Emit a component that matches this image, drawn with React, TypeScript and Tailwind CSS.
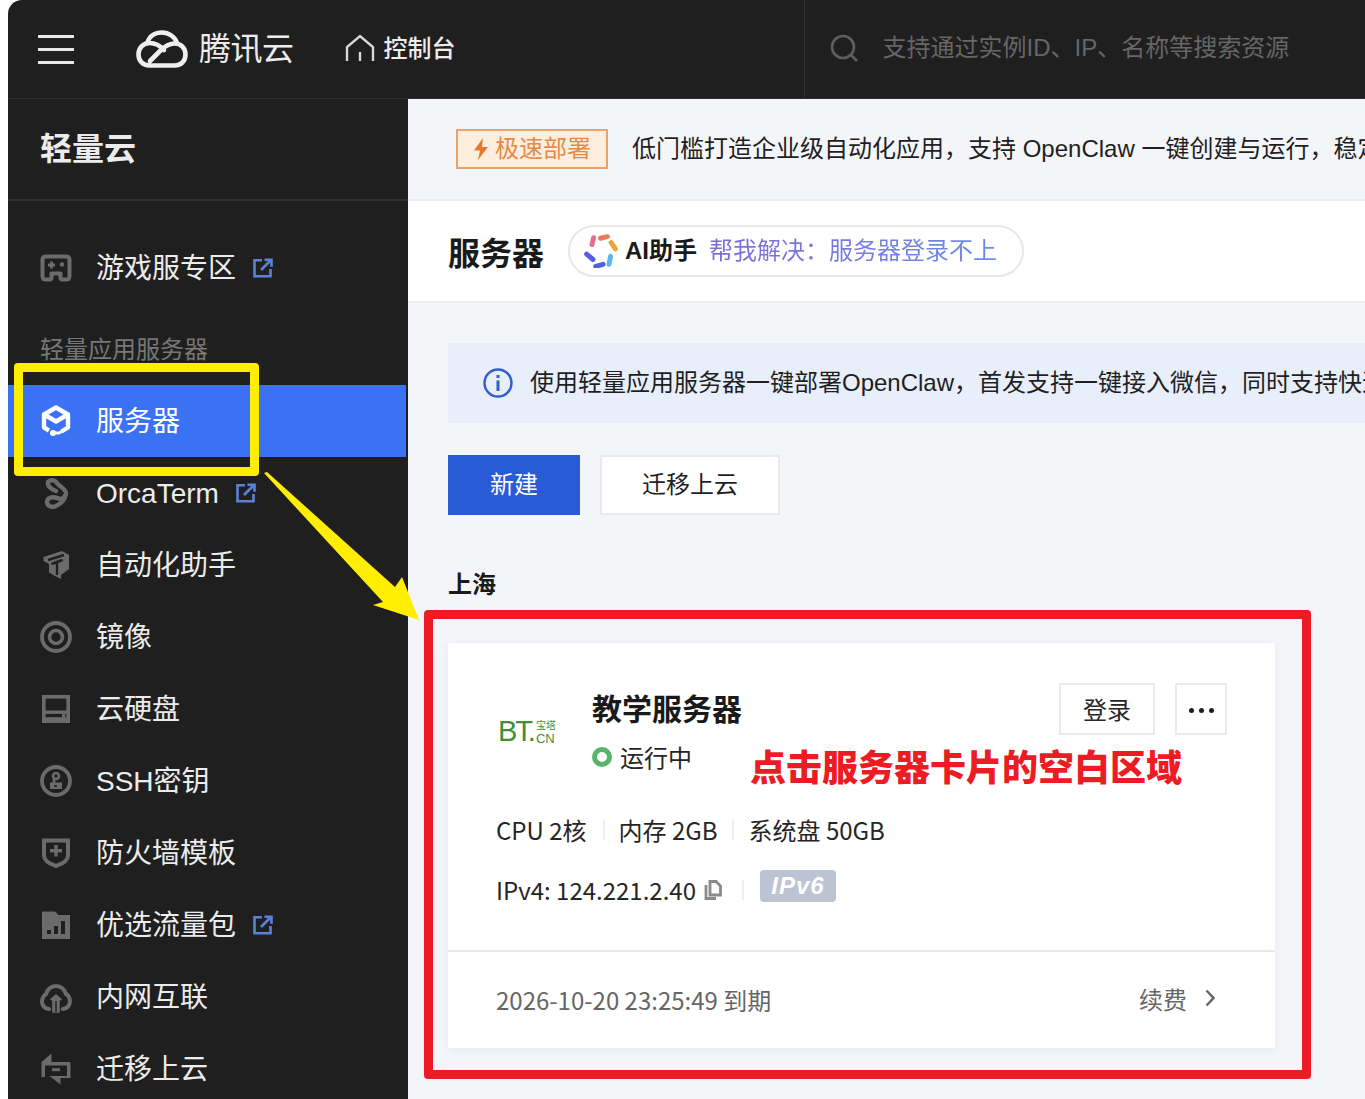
import type { ReactNode } from 'react';

const C = '#6b6b6b';

function ExternalIcon() {
  return (
    <svg width="20" height="20" viewBox="0 0 20 20" fill="none" stroke="#5c82d8" strokeWidth="2.6">
      <path d="M9 2.3H1.5v16h16V11" />
      <path d="M8 12 17 3" />
      <path d="M11.5 1.8h7v7" fill="none" />
    </svg>
  );
}

function GameIcon() {
  return (
    <svg width="32" height="32" viewBox="0 0 32 32" fill="none">
      <path d="M2.500 8c0-2 1-3.500 3-3.500h21c2 0 3 1.500 3 3.500v16c0 2-1 3.500-3 3.500h-4c-1.500 0-2-1-2-2v-4h-9v4c0 1-.5 2-2 2h-4c-2 0-3-1.500-3-3.500z" stroke={C} strokeWidth="4" strokeLinejoin="round" />
      <path d="M8 13h7M11.500 9.500v7" stroke={C} strokeWidth="2.800" />
      <circle cx="22" cy="12.500" r="2.200" fill={C} />
    </svg>
  );
}

function ServerIcon() {
  return (
    <svg width="32" height="32" viewBox="0 0 32 32" fill="none" stroke="#fff" strokeWidth="4.400" strokeLinejoin="round">
      <path d="M9 25.500 4 22.500V9.500l12-7 12 7v13l-6.500 4" />
      <path d="m5 10 11 6.500L27 10" />
      <circle cx="13" cy="28" r="3" fill="#fff" stroke="none" />
      <path d="M14 28h5l5-3" strokeWidth="3" />
    </svg>
  );
}

function OrcaIcon() {
  return (
    <svg width="32" height="32" viewBox="0 0 32 32" fill="none" stroke={C} strokeWidth="4.400" strokeLinecap="round" strokeLinejoin="round">
      <path d="M8 5c3-3 7-2 9 1s9 6 9 10-4 7-9 5" />
      <path d="M17 21c-5-2-10 0-10 4s5 6 9 4 9-6 9-10" />
      <path d="M8 5c-1 4 3 7 8 9" />
    </svg>
  );
}

function RobotIcon() {
  return (
    <svg width="32" height="32" viewBox="0 0 32 32" fill="none">
      <path d="M3.500 8 22 2l7 4v14l-8 6v4l-7-3.500-5-3V15l-5.500-3z" fill={C} />
      <path d="m8 11 16-5M11.500 15l11-4M17 14v12" stroke="#1f1f1f" strokeWidth="2.400" />
    </svg>
  );
}

function ImageIcon() {
  return (
    <svg width="32" height="32" viewBox="0 0 32 32" fill="none" stroke={C}>
      <circle cx="16" cy="16" r="14" strokeWidth="3.800" />
      <circle cx="16" cy="16" r="6.500" strokeWidth="3.600" />
    </svg>
  );
}

function DiskIcon() {
  return (
    <svg width="32" height="32" viewBox="0 0 32 32" fill="none">
      <rect x="3.800" y="3.800" width="24.400" height="24.400" stroke={C} strokeWidth="3.600" />
      <rect x="3" y="17.500" width="26" height="3.400" fill={C} />
      <rect x="22" y="21" width="3.200" height="3.200" fill={C} />
      <rect x="3" y="24.200" width="26" height="4" fill={C} />
    </svg>
  );
}

function KeyIcon() {
  return (
    <svg width="32" height="32" viewBox="0 0 32 32" fill="none">
      <circle cx="16" cy="16" r="14" stroke={C} strokeWidth="3.800" />
      <path d="M10 17.500h12V24H10z" fill={C} />
      <circle cx="16" cy="11" r="3" stroke={C} strokeWidth="2.600" />
      <path d="M14 14v4" stroke={C} strokeWidth="2.600" />
      <path d="M14 21h3" stroke="#1f1f1f" strokeWidth="1.600" />
    </svg>
  );
}

function ShieldIcon() {
  return (
    <svg width="32" height="32" viewBox="0 0 32 32" fill="none">
      <path d="M4 3.500h24v15c0 5-6 8.500-12 10.500-6-2-12-5.500-12-10.500z" stroke={C} strokeWidth="4" />
      <path d="M16 8v11.500M10 13.800h12" stroke={C} strokeWidth="3.400" />
    </svg>
  );
}

function TrafficIcon() {
  return (
    <svg width="32" height="32" viewBox="0 0 32 32">
      <path d="M2 2.500h13l3.500 3.500H30v24H2z" fill={C} />
      <path d="M7 21h4v4H7zM14 17h4v8h-4zM21 12h4v13h-4z" fill="#1f1f1f" />
    </svg>
  );
}

function LinkIcon() {
  return (
    <svg width="32" height="32" viewBox="0 0 32 32" fill="none" stroke={C} strokeWidth="4">
      <path d="M9 28C3 27.500 1.500 22 2.200 19c.8-3.500 2.800-5.500 4-6A10 10 0 0 1 25.800 13c1.500.5 3.400 2.500 4 6 .5 3-1 8.500-7 9" strokeLinecap="round" />
      <path d="M11 18.500 16 14l5 4.500h-2V31h-6V18.500z" fill={C} strokeWidth="1.600" strokeLinejoin="round" />
      <path d="M16 20v11" stroke="#1f1f1f" strokeWidth="1.400" />
    </svg>
  );
}

function MigrateIcon() {
  return (
    <svg width="32" height="32" viewBox="0 0 32 32" fill={C}>
      <path d="M1.500 24V9l10-8.500V9H30v3.500H5V24z" />
      <path d="M30.500 10v15H20.500v6.500L9.500 23H27V10z" />
      <rect x="12" y="15.200" width="8" height="3" />
    </svg>
  );
}

function CloudLogo() {
  return (
    <svg width="52" height="38" viewBox="0 0 52 38" fill="none" stroke="#efefef" strokeWidth="4.600" strokeLinecap="round" strokeLinejoin="round">
      <path d="M11.500 13C13 6 19 2.500 26 2.500S39 7 41 13" />
      <path d="M28 20c-4-4.500-9-7-14.500-7C7 13 2.500 18 2.500 24.500s4.500 11 11 11H39c6 0 10.500-4.500 10.500-11S45 13.500 38.500 13.500C32 13.500 28 17 24 21L14 31" />
    </svg>
  );
}

function AiIcon() {
  const sticks = [
    ['M7.500 10 9 3.500', '#ea6d86'],
    ['M15.500 4 22 2.500', '#ee7a5a'],
    ['M25.500 8 29.500 14', '#efa23b'],
    ['M25 21 23.500 28.500', '#5fb2f2'],
    ['M18 28.500 11 30.500', '#4d63e2'],
    ['M8.500 24 2.500 19', '#5a5be6'],
  ];
  return (
    <svg width="34" height="34" viewBox="0 0 32 32" fill="none" strokeWidth="4.600" strokeLinecap="round">
      {sticks.map(([d, c]) => (
        <path key={d} d={d} stroke={c} />
      ))}
    </svg>
  );
}

function NavItem({ icon, label, external, active }: { icon: ReactNode; label: string; external?: boolean; active?: boolean }) {
  return (
    <div className={`flex h-[72px] w-[398px] items-center gap-6 pl-8 text-[28px] ${active ? 'bg-[#3b72f4] text-white' : 'text-[#ececec]'}`}>
      <span className="flex w-8 shrink-0 items-center justify-center">{icon}</span>
      <span className="pt-[2px]">{label}</span>
      {external && (
        <span className="-ml-[7px] flex">
          <ExternalIcon />
        </span>
      )}
    </div>
  );
}

export default function App() {
  return (
    <div className="relative h-[1099px] w-[1365px] overflow-hidden bg-white pl-2 font-['Liberation_Sans','Noto_Sans_CJK_SC',sans-serif]">
      <div className="flex h-full flex-col overflow-hidden rounded-tl-[14px] bg-[#1f1f1f]">
        {/* Top bar */}
        <header className="flex h-[99px] shrink-0 items-center border-b border-[#2e2e2e]">
          <div className="ml-[30px] flex w-9 flex-col gap-[10px]">
            <span className="h-[3px] bg-[#e8e8e8]" />
            <span className="h-[3px] bg-[#e8e8e8]" />
            <span className="h-[3px] bg-[#e8e8e8]" />
          </div>
          <div className="ml-[62px] flex">
            <CloudLogo />
          </div>
          <span className="ml-[11px] text-[32px] leading-none tracking-[-0.5px] text-[#ececec]">腾讯云</span>
          <svg className="ml-[51px]" width="30" height="30" viewBox="0 0 30 30" fill="none" stroke="#d8d8d8" strokeWidth="2.400">
            <path d="M2 27V13L15 2l13 11v14" />
            <path d="M15 18v9" />
          </svg>
          <span className="ml-[9px] text-2xl font-medium text-[#ececec]">控制台</span>
          <div className="ml-[348px] flex h-full items-center border-l border-[#303030] pl-[25px]">
            <svg className="-mt-[2px]" width="28" height="28" viewBox="0 0 28 28" fill="none" stroke="#5f5f5f" strokeWidth="2.600">
              <circle cx="13" cy="13" r="11" />
              <path d="m21 21 6 6" />
            </svg>
            <span className="ml-[25px] -mt-[2px] text-2xl whitespace-nowrap text-[#666666]">支持通过实例ID、IP、名称等搜索资源</span>
          </div>
        </header>

        <div className="flex min-h-0 flex-1">
          {/* Sidebar */}
          <aside className="w-[400px] shrink-0">
            <div className="flex h-[102px] items-center border-b-2 border-[#333333] pl-8 text-[32px] font-bold text-[#ececec]">轻量云</div>
            <div className="pt-[31px]">
              <NavItem icon={<GameIcon />} label="游戏服专区" external />
              <div className="mt-[27px] mb-[18px] h-9 pt-[1px] pl-8 text-2xl leading-9 text-[#777777]">轻量应用服务器</div>
              <NavItem icon={<ServerIcon />} label="服务器" active />
              <NavItem icon={<OrcaIcon />} label="OrcaTerm" external />
              <NavItem icon={<RobotIcon />} label="自动化助手" />
              <NavItem icon={<ImageIcon />} label="镜像" />
              <NavItem icon={<DiskIcon />} label="云硬盘" />
              <NavItem icon={<KeyIcon />} label="SSH密钥" />
              <NavItem icon={<ShieldIcon />} label="防火墙模板" />
              <NavItem icon={<TrafficIcon />} label="优选流量包" external />
              <NavItem icon={<LinkIcon />} label="内网互联" />
              <NavItem icon={<MigrateIcon />} label="迁移上云" />
            </div>
          </aside>

          {/* Main */}
          <main className="min-w-0 flex-1 bg-[#f3f5f9]">
            <div className="flex h-[102px] items-start border-b-2 border-[#ebedf0] bg-[#f4f5f8] pt-[30px] pl-12 whitespace-nowrap">
              <span className="flex h-10 w-[152px] shrink-0 items-center justify-center gap-[6px] border-2 border-[#e8a46e] bg-[#fdeedd] text-2xl text-[#e58a48]">
                <svg width="16" height="22" viewBox="0 0 16 22" fill="#e5772e">
                  <path d="M10 0 1 12.500h6L5 22l10-13H9z" />
                </svg>
                极速部署
              </span>
              <span className="ml-6 text-2xl leading-10 text-[#1f1f1f]">低门槛打造企业级自动化应用，支持 OpenClaw 一键创建与运行，稳定可靠</span>
            </div>

            <div className="flex h-[102px] items-center border-b-2 border-[#ebedf0] bg-white pl-10">
              <h1 className="mt-[6px] text-[32px] font-bold text-[#1a1a1a]">服务器</h1>
              <div className="ml-6 flex h-[52px] w-[456px] items-center rounded-full border-2 border-[#e6e7ea] pl-[14px]">
                <AiIcon />
                <span className="ml-[7px] text-2xl font-bold text-[#1a1a1a]">AI助手</span>
                <span className="ml-3 bg-linear-to-r from-[#7e6bd8] to-[#6a8be8] bg-clip-text text-2xl text-transparent">帮我解决：服务器登录不上</span>
              </div>
            </div>

            <div className="pt-10 pl-10">
              <div className="flex h-20 items-center bg-[#e8eefa] pl-[35px] whitespace-nowrap">
                <svg width="30" height="30" viewBox="0 0 30 30" fill="none" stroke="#2f5fd0" strokeWidth="2.400" className="shrink-0">
                  <circle cx="15" cy="15" r="13.500" />
                  <path d="M15 12.500V23" strokeWidth="3" />
                  <path d="M15 7v3" strokeWidth="3" />
                </svg>
                <span className="ml-[17px] text-2xl text-[#1f1f1f]">使用轻量应用服务器一键部署OpenClaw，首发支持一键接入微信，同时支持快速接入</span>
              </div>

              <div className="mt-8 flex gap-5">
                <button className="h-[60px] w-[132px] bg-[#2a5bd7] text-2xl text-white">新建</button>
                <button className="h-[60px] w-[180px] border-2 border-[#e8eaee] bg-white text-2xl text-[#1f1f1f]">迁移上云</button>
              </div>

              <h2 className="mt-[52px] h-9 text-2xl leading-9 font-bold text-[#1a1a1a]">上海</h2>

              {/* Server card */}
              <div className="mt-10 w-[827px] bg-white font-['Noto_Sans_CJK_SC','Liberation_Sans',sans-serif] shadow-[0_2px_8px_rgba(40,50,80,0.06)]">
                <div className="h-[307px] px-12 pt-10">
                  <div className="flex">
                    <div className="w-24 shrink-0 pt-[34px] pl-[2px]">
                      <div className="flex items-end text-[#3f8f37]">
                        <span className="font-['Liberation_Sans',sans-serif] text-[29px] leading-[28px] tracking-[-2px]">BT.</span>
                        <span className="ml-[2px] flex flex-col font-['Liberation_Sans','Noto_Sans_CJK_SC',sans-serif] text-[10px] leading-[12px]">
                          <span className="w-[20px] text-[10px] leading-[12px]">宝塔</span>
                          <span className="text-[13px] leading-[13px]">CN</span>
                        </span>
                      </div>
                    </div>
                    <div>
                      <div className="h-[52px] text-[30px] leading-[48px] font-bold text-[#1a1a1a]">教学服务器</div>
                      <div className="mt-[4px] flex h-9 items-center gap-2 text-2xl text-[#262626]">
                        <span className="h-5 w-5 rounded-full border-[5px] border-[#55b56a]" />
                        运行中
                      </div>
                    </div>
                    <button className="ml-auto h-[52px] w-24 border-2 border-[#e8eaee] text-2xl text-[#262626]">登录</button>
                    <button className="ml-5 flex h-[52px] w-[52px] items-center justify-center gap-[5px] border-2 border-[#e8eaee] pt-[3px]">
                      <span className="h-[5px] w-[5px] rounded-full bg-[#1f1f1f]" />
                      <span className="h-[5px] w-[5px] rounded-full bg-[#1f1f1f]" />
                      <span className="h-[5px] w-[5px] rounded-full bg-[#1f1f1f]" />
                    </button>
                  </div>

                  <div className="mt-[37px] flex h-9 items-center text-2xl text-[#262626]">
                    <span>CPU 2核</span>
                    <span className="mr-[14px] ml-4 h-5 w-[2px] bg-[#eeeeee]" />
                    <span>内存 2GB</span>
                    <span className="mr-[15px] ml-[14px] h-5 w-[2px] bg-[#eeeeee]" />
                    <span>系统盘 50GB</span>
                  </div>

                  <div className="mt-6 flex h-9 items-center text-2xl text-[#262626]">
                    <span>IPv4: 124.221.2.40</span>
                    <svg className="ml-2" width="18" height="20" viewBox="0 0 18 20" fill="none" stroke="#8a8a8a" strokeWidth="2.800">
                      <path d="M6 1.500h6l4.500 4.500v9H6z" />
                      <path d="M2 5v13.500h10" />
                    </svg>
                    <span className="mr-4 ml-[20px] h-5 w-[2px] bg-[#eeeeee]" />
                    <span className="-mt-[8px] flex h-8 w-[76px] items-center justify-center rounded-[4px] bg-[#bcc4d3] font-['Liberation_Sans',sans-serif] text-2xl font-bold tracking-[1px] text-white italic">IPv6</span>
                  </div>
                </div>

                <div className="flex h-[98px] items-center justify-between border-t-2 border-[#e8eaee] pr-[60px] pl-12 text-2xl text-[#666666]">
                  <span>2026-10-20 23:25:49 到期</span>
                  <span className="-mt-[2px] flex items-center gap-[18px]">
                    续费
                    <svg className="-mt-[3px]" width="10" height="18" viewBox="0 0 10 18" fill="none" stroke="#666666" strokeWidth="2.400">
                      <path d="m1.500 1.500 7 7.500-7 7.500" />
                    </svg>
                  </span>
                </div>
              </div>
            </div>
          </main>
        </div>
      </div>

      {/* Annotations drawn over the screenshot */}
      <div className="absolute top-[363px] left-[14px] h-[113px] w-[245px] rounded-[4px] border-[9px] border-[#ffee00]" />
      <svg className="absolute top-[465px] left-[260px]" width="165" height="160" viewBox="260 465 165 160" fill="#ffee00">
        <path d="M264 473 267 472 395 587 402 577 419 620 373 605 383 602z" />
      </svg>
      <div className="absolute top-[610px] left-[424px] h-[469px] w-[887px] rounded-[4px] border-[9px] border-[#ed1c24]" />
      <div className="absolute top-[742px] left-[750px] text-[36px] leading-[54px] font-black whitespace-nowrap text-[#ed1c24]">点击服务器卡片的空白区域</div>
    </div>
  );
}
